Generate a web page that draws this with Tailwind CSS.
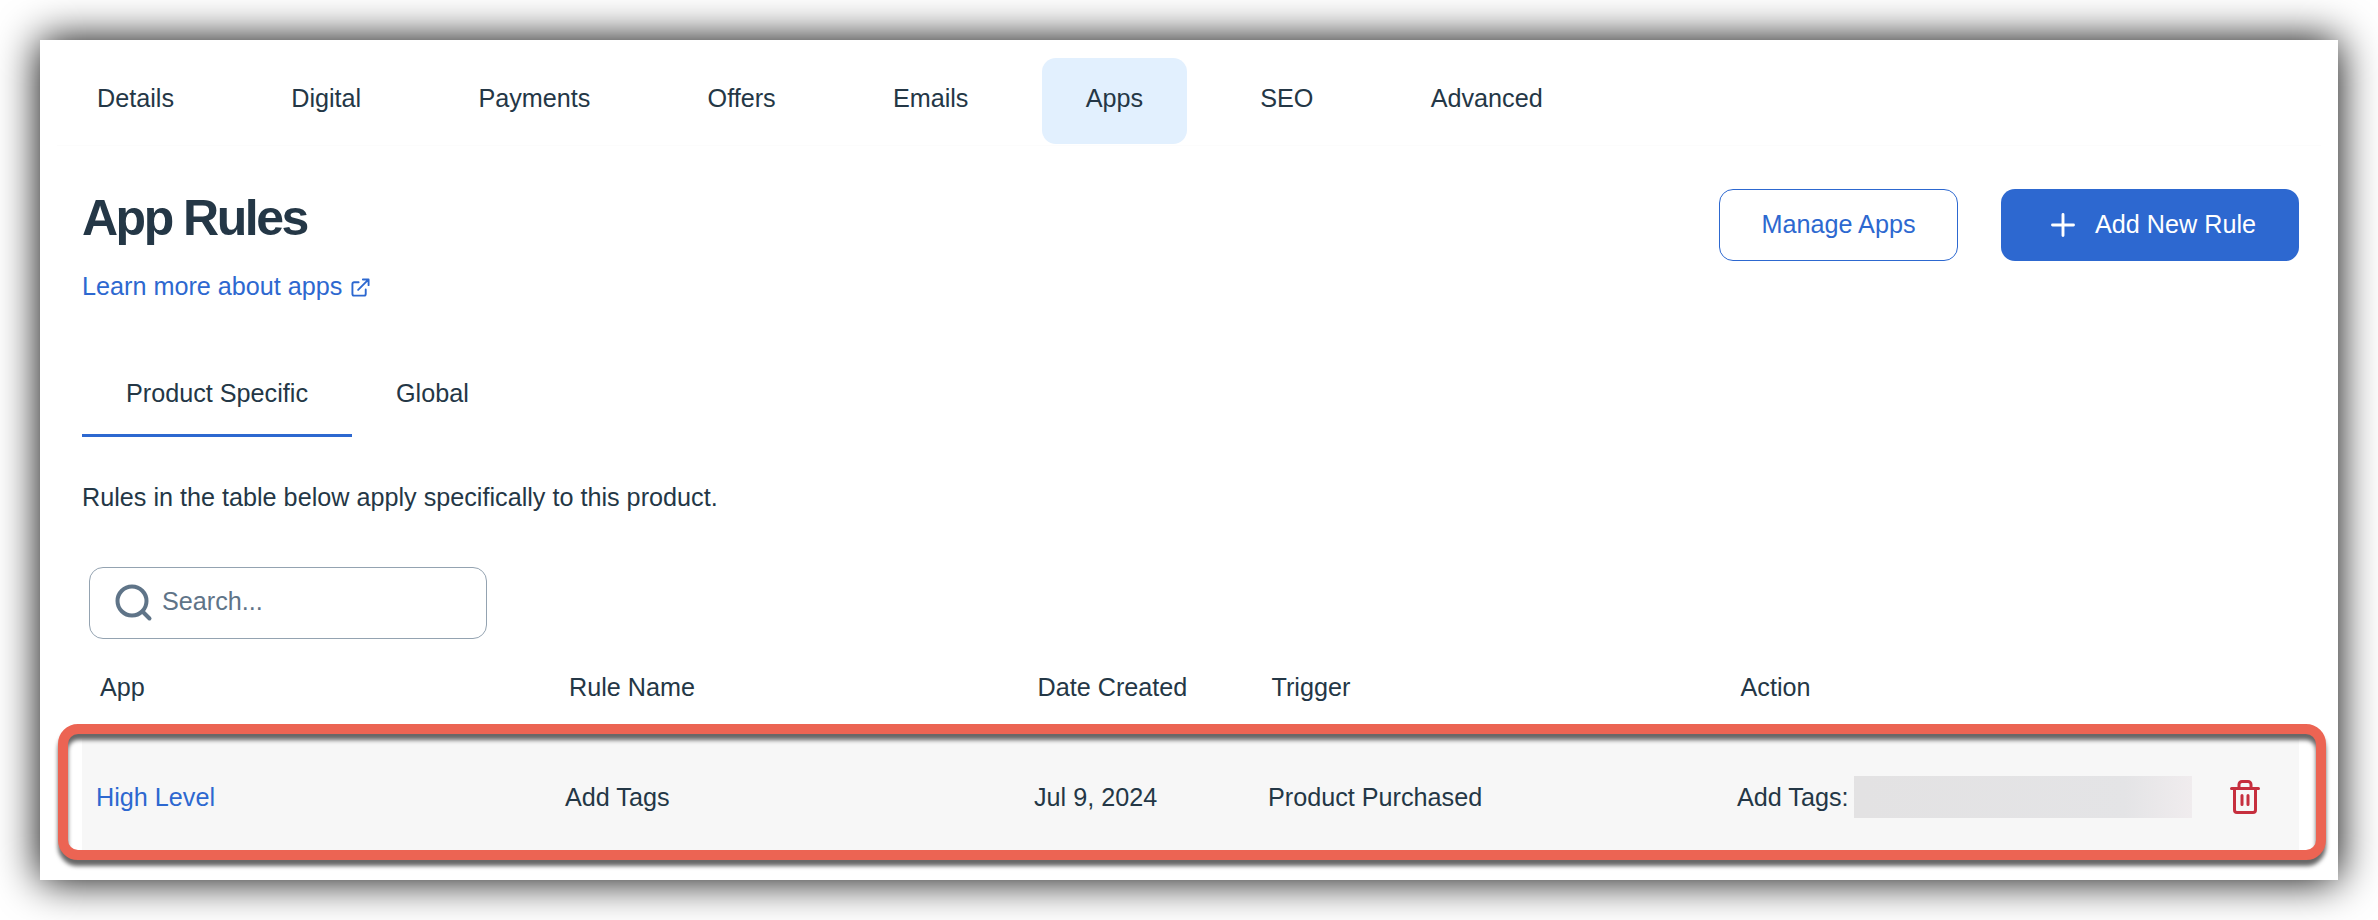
<!DOCTYPE html>
<html lang="en">
<head>
    <meta charset="UTF-8">
    <meta name="viewport" content="width=device-width, initial-scale=1.0">
    <script src="https://cdn.jsdelivr.net/npm/@tailwindcss/browser@4"></script>
    <title>App Rules</title>
</head>
<body class="bg-white overflow-hidden font-['Liberation_Sans',sans-serif] text-[25.2px] leading-[36px] text-[#243746]">
    <div class="h-[920px] w-[2378px] p-10">
        <div class="relative h-full bg-white shadow-[0_0_40px_#000]">
            <nav class="mx-[17px] flex h-[106px] items-start gap-[29.2px] border-b border-[#fcfcfc] pt-[18px]">
                <a class="-ml-1 flex h-[86px] items-center px-[44px] pb-1.5">Details</a>
                <a class="flex h-[86px] items-center px-[44px] pb-1.5">Digital</a>
                <a class="flex h-[86px] items-center px-[44px] pb-1.5">Payments</a>
                <a class="flex h-[86px] items-center px-[44px] pb-1.5">Offers</a>
                <a class="flex h-[86px] items-center px-[44px] pb-1.5">Emails</a>
                <a class="flex h-[86px] items-center rounded-[14px] bg-[#e2f0fe] px-[44px] pb-1.5">Apps</a>
                <a class="flex h-[86px] items-center px-[44px] pb-1.5">SEO</a>
                <a class="flex h-[86px] items-center px-[44px] pb-1.5">Advanced</a>
            </nav>

            <header class="flex h-[194px] items-start justify-between pl-[42px] pr-[39px] pt-[43px]">
                <div class="-mt-px">
                    <h1 class="h-[80px] text-[50px] font-bold leading-[60px] tracking-[-2.5px]">App Rules</h1>
                    <a class="flex items-center gap-[9px] text-[#2d68d0]">Learn more about apps
                        <svg class="mt-0.5 size-[19px]" viewBox="0 0 20 20" fill="none" stroke="currentColor" stroke-width="2" stroke-linecap="round" stroke-linejoin="round"><path d="M8 4.500H3.200a1.700 1.700 0 0 0-1.700 1.700v10.600a1.700 1.700 0 0 0 1.700 1.700h10.600a1.700 1.700 0 0 0 1.700-1.700V12M12.500 1.500h6v6M18.500 1.500L7.500 12.500"/></svg>
                    </a>
                </div>
                <div class="flex gap-[43px]">
                    <button class="h-[72px] w-[239px] rounded-[14px] border border-[#2d68d0] pb-0.5 text-[#2d68d0]">Manage Apps</button>
                    <button class="flex h-[72px] w-[298px] items-center rounded-[14px] bg-[#2d68d0] pl-[50px] text-white">
                        <svg class="mr-[20px] size-6" viewBox="0 0 24 24" fill="none" stroke="currentColor" stroke-width="2.9" stroke-linecap="round"><path d="M12 1.500v21M1.500 12h21"/></svg>
                        <span class="pb-0.5">Add New Rule</span>
                    </button>
                </div>
            </header>

            <div class="flex pl-[42px]">
                <a class="h-[97px] w-[270px] border-b-3 border-[#2d68d0] px-[44px] pt-[35px]">Product Specific</a>
                <a class="h-[97px] px-[44px] pt-[35px]">Global</a>
            </div>

            <p class="pl-[42px] pt-[42px]">Rules in the table below apply specifically to this product.</p>

            <div class="ml-[49px] mt-[52px] flex h-[72px] w-[398px] items-center rounded-[14px] border border-[#94a3b1] pl-[25px] text-[#5f7488]">
                <svg class="mr-[9px] size-[38px]" viewBox="0 0 38 38" fill="none" stroke="currentColor" stroke-width="4" stroke-linecap="round"><circle cx="17" cy="17" r="14.500"/><path d="M27.500 27.500l7 7"/></svg>
                <span class="pb-1">Search...</span>
            </div>

            <div class="ml-[42px] grid h-[100px] w-[2217px] grid-cols-[469px_468.5px_234px_469px_auto] pl-[18px] pt-[30px]">
                <span>App</span>
                <span>Rule Name</span>
                <span>Date Created</span>
                <span>Trigger</span>
                <span>Action</span>
            </div>
            <div class="ml-[42px] grid h-[116px] w-[2217px] grid-cols-[469px_469px_234px_469px_auto] items-center bg-[#f7f7f7] pl-[14px]">
                <span class="pb-px text-[#2d68d0]">High Level</span>
                <span class="pb-px">Add Tags</span>
                <span class="pb-px">Jul 9, 2024</span>
                <span class="pb-px">Product Purchased</span>
                <div class="flex items-center">
                    <span class="w-[117px] whitespace-nowrap pb-px">Add Tags:</span>
                    <div class="h-[42px] w-[338px] bg-linear-to-r from-[#e3e2e3] via-[#e4e4e6] via-80% to-[#f0ecee]"></div>
                    <svg class="ml-[38px] h-[34px] w-[30px]" viewBox="0 0 30 34" fill="none" stroke="#c62f3e" stroke-width="3" stroke-linecap="round" stroke-linejoin="round"><path d="M1.500 8.500h27M4.500 8.500v21.500a2.500 2.500 0 0 0 2.500 2.500h16a2.500 2.500 0 0 0 2.500-2.500V8.500M9 8V4.500a3 3 0 0 1 3-3h6a3 3 0 0 1 3 3V8M12 15.500v9M18 15.500v9"/></svg>
                </div>
            </div>

            <!-- highlight around the rule row -->
            <div class="absolute left-[18px] top-[684px] h-[136px] w-[2268px] rounded-[20px] border-10 border-[#ec6453] drop-shadow-[0_6px_2px_rgba(0,0,0,0.6)]"></div>
        </div>
    </div>
</body>
</html>
